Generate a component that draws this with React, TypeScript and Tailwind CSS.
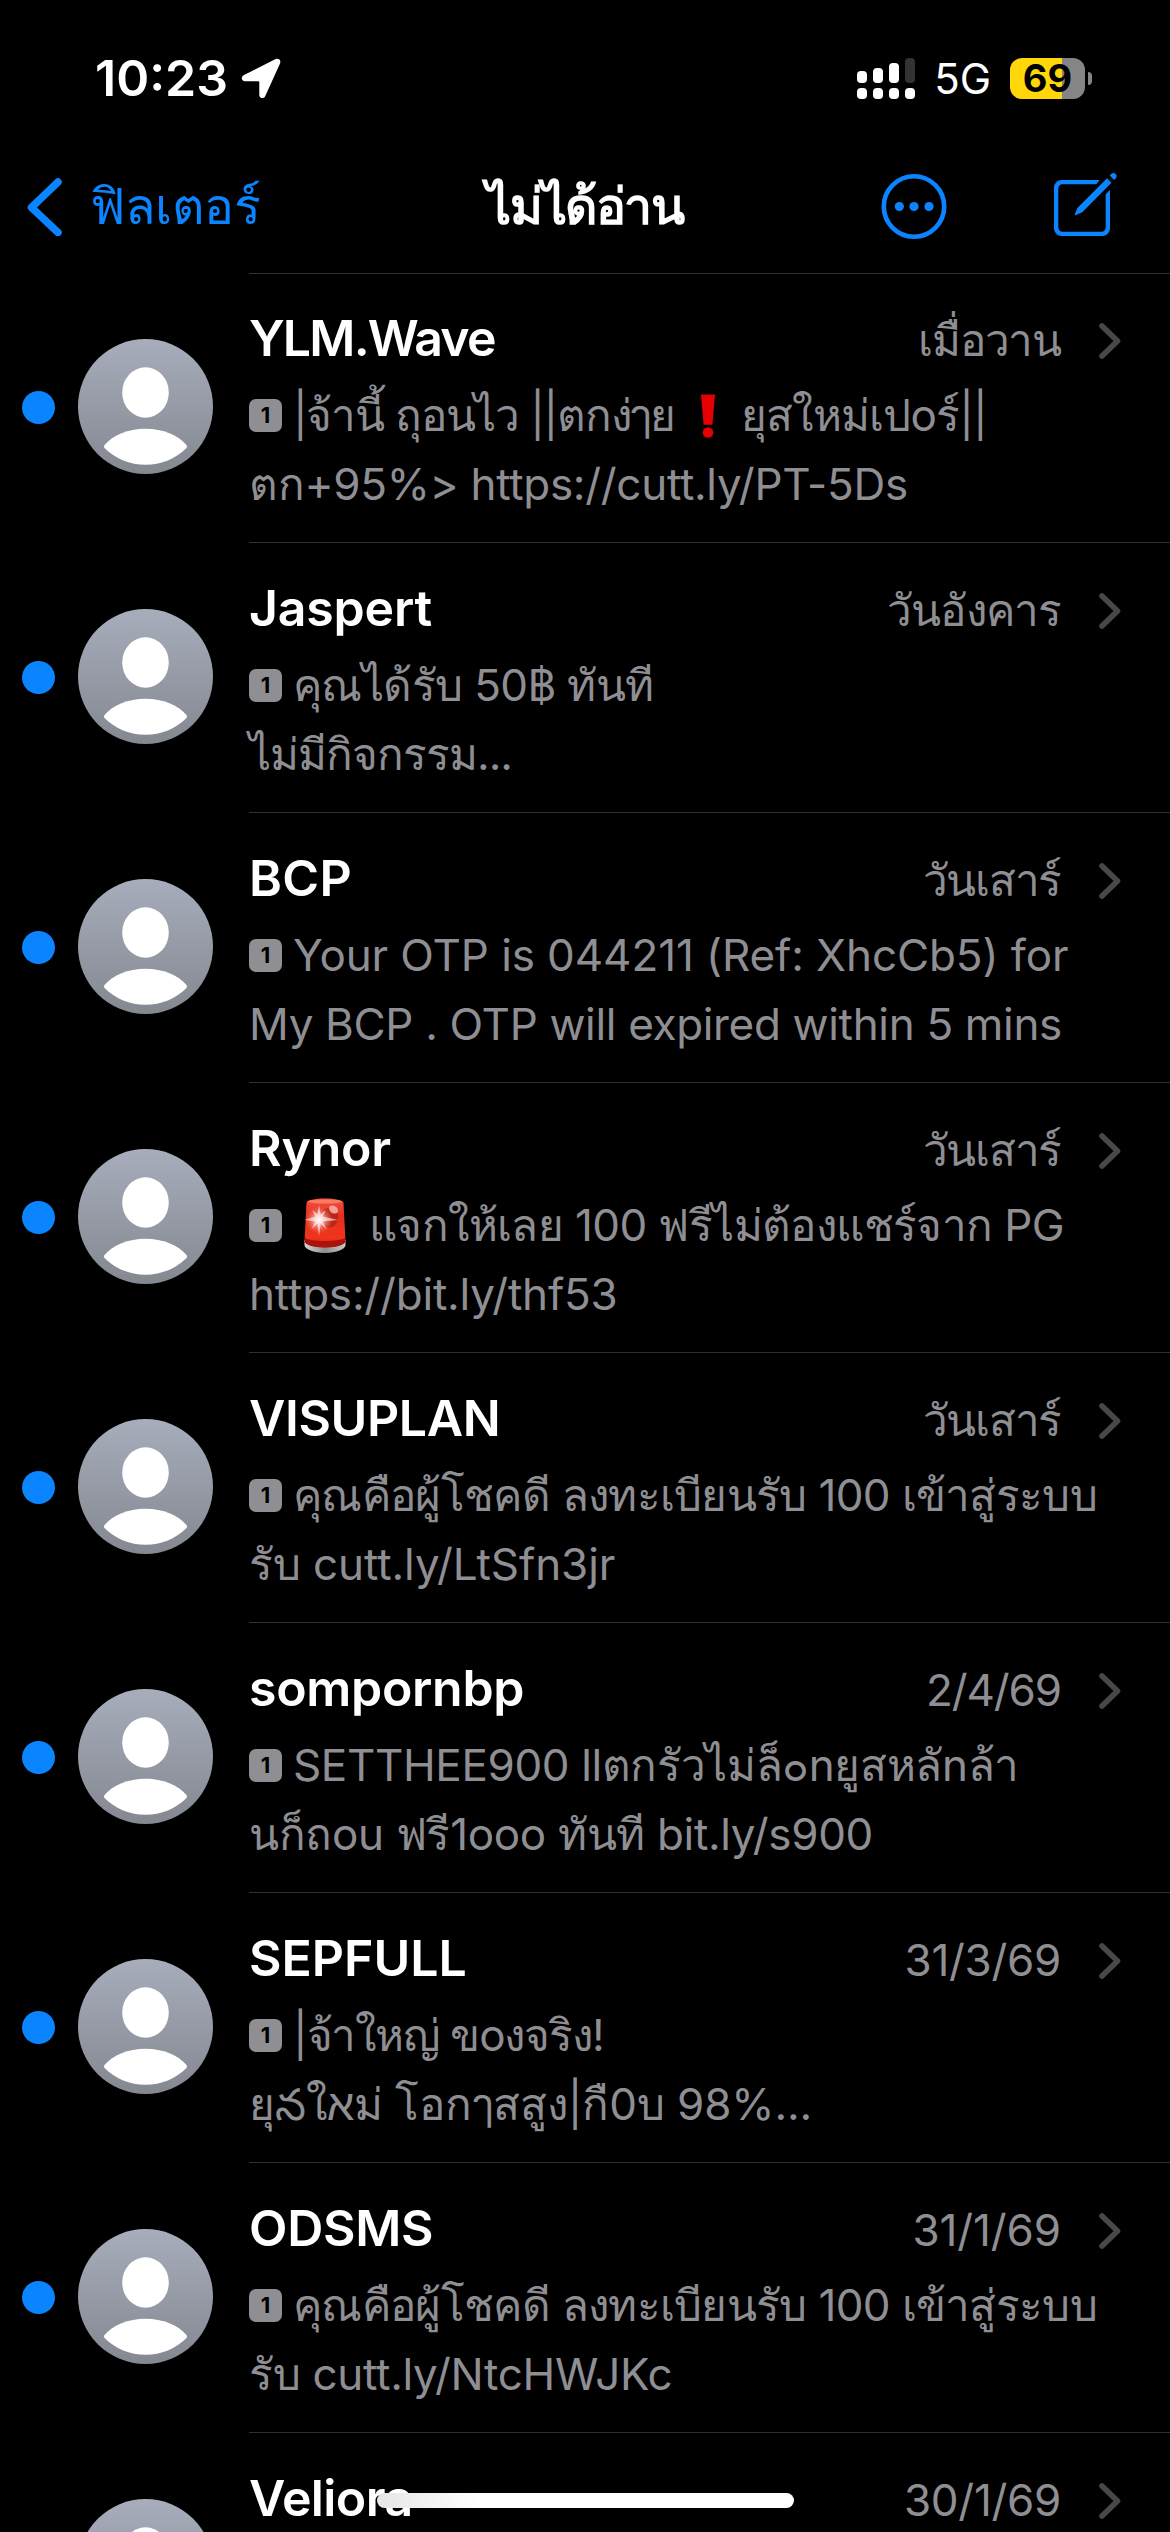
import type { ReactNode } from "react";

type Message = {
  name: string;
  nameClass?: string;
  date: string;
  dateClass?: string;
  first: ReactNode;
  second: string;
  firstClass?: string;
  secondClass?: string;
};

function Exclamation() {
  return (
    <svg viewBox="0 0 14 44" className="mx-[26px] h-[44px] w-[14px] shrink-0">
      <path d="M0 0.5h14l-2.6 30.3h-8.8z" fill="#e60000" />
      <circle cx="7" cy="38.5" r="5.3" fill="#e60000" />
    </svg>
  );
}

function Siren() {
  return (
    <svg viewBox="0 0 42 56" className="mr-[23px] ml-[11px] h-[56px] w-[42px] shrink-0">
      <defs>
        <linearGradient id="dome" x1="0" y1="0" x2="0" y2="1">
          <stop offset="0" stopColor="#f2543f" />
          <stop offset="0.35" stopColor="#e3301f" />
          <stop offset="0.8" stopColor="#f0341d" />
          <stop offset="1" stopColor="#d6200f" />
        </linearGradient>
        <linearGradient id="base" x1="0" y1="0" x2="1" y2="0">
          <stop offset="0" stopColor="#d5d5d2" />
          <stop offset="0.5" stopColor="#8f908d" />
          <stop offset="1" stopColor="#c9c9c6" />
        </linearGradient>
        <radialGradient id="glow">
          <stop offset="0" stopColor="#fff" />
          <stop offset="0.3" stopColor="#ffc4c0" stopOpacity="0.85" />
          <stop offset="1" stopColor="#ff6a5c" stopOpacity="0" />
        </radialGradient>
      </defs>
      <path d="M0.5 42v5c0 4 9 8 20.5 8s20.5-4 20.5-8v-5z" fill="url(#base)" />
      <path d="M2.5 5C2.5 2 11 0.500 21 0.500S39 2 39.5 5l2 38c0 3-9 6.500-20.5 6.500S0.500 46 0.500 43z" fill="url(#dome)" />
      <path d="M1 40c5 4 34 4 40 0l0.300 3.500c0 3-9 6-20.300 6S0.700 46.500 0.700 43.500z" fill="#a8140c" />
      <ellipse cx="21" cy="3.5" rx="17" ry="2" fill="#ff8d76" opacity="0.7" />
      <path d="M19 12c8-5 17 0 15 9s-10 10-17 8z" fill="#8f170d" opacity="0.5" />
      <ellipse cx="29.5" cy="11.5" rx="5" ry="3.6" transform="rotate(35 29.5 11.5)" fill="#ffb3ab" opacity="0.85" />
      <circle cx="15" cy="22" r="14" fill="url(#glow)" />
      <path
        d="M15 7l1.700 9.500 5-4.500-3 6.600L34 22l-15.300 1.400 4 8-6-5.800L15 38l-1.700-12.400-6 5.800 4-8L0.500 22l10.800-3.400-3-6.600 5 4.500z"
        fill="#fff"
        opacity="0.6"
      />
    </svg>
  );
}

const messages: Message[] = [
  {
    name: "YLM.Wave",
    nameClass: "tracking-[-1.8px]",
    date: "เมื่อวาน",
    dateClass: "tracking-[-1.2px]",
    first: (
      <>
        <span className="tracking-[-1.2px]">|จ้านี้ ถุอนไว ||ตกง่ๅย</span>
        <Exclamation />
        <span className="tracking-[-0.8px]">ยุสใหม่เปoร์||</span>
      </>
    ),
    second: "ตก+95%> https://cutt.ly/PT-5Ds",
    secondClass: "tracking-[-0.3px]",
  },
  {
    name: "Jaspert",
    nameClass: "tracking-[-0.2px]",
    date: "วันอังคาร",
    dateClass: "tracking-[-0.9px]",
    first: "คุณได้รับ 50฿ ทันที",
    firstClass: "tracking-[-0.6px]",
    second: "ไม่มีกิจกรรม...",
    secondClass: "tracking-[-1px]",
  },
  {
    name: "BCP",
    nameClass: "tracking-[0.3px]",
    date: "วันเสาร์",
    dateClass: "tracking-[-1.3px]",
    first: "Your OTP is 044211 (Ref: XhcCb5) for",
    firstClass: "tracking-[-0.1px]",
    second: "My BCP . OTP will expired within 5 mins",
    secondClass: "tracking-[-0.33px]",
  },
  {
    name: "Rynor",
    nameClass: "tracking-[-0.2px]",
    date: "วันเสาร์",
    dateClass: "tracking-[-1.3px]",
    first: (
      <>
        <Siren />
        <span className="tracking-[-0.6px]">แจกให้เลย 100 ฟรีไม่ต้องแชร์จาก PG</span>
      </>
    ),
    second: "https://bit.ly/thf53",
    secondClass: "tracking-[-0.2px]",
  },
  {
    name: "VISUPLAN",
    nameClass: "tracking-[-0.4px]",
    date: "วันเสาร์",
    dateClass: "tracking-[-1.3px]",
    first: "คุณคือผู้โชคดี ลงทะเบียนรับ 100 เข้าสู่ระบบ",
    firstClass: "tracking-[-0.68px]",
    second: "รับ cutt.ly/LtSfn3jr",
    secondClass: "tracking-[-0.1px]",
  },
  {
    name: "sompornbp",
    nameClass: "tracking-[-0.3px]",
    date: "2/4/69",
    dateClass: "tracking-[-1.1px]",
    first: "SETTHEE900 llตกรัวไม่ล็๐nยูสหลัnล้า",
    firstClass: "tracking-[-0.37px]",
    second: "นก็ถou ฟรี1ooo ทันที bit.ly/s900",
    secondClass: "tracking-[-0.33px]",
  },
  {
    name: "SEPFULL",
    date: "31/3/69",
    dateClass: "tracking-[-0.3px]",
    first: "|จ้าใหญ่ ขoงจริง!",
    firstClass: "tracking-[-1.1px]",
    second: "ยุనใאม่ โอกๅสสูง|กื0บ 98%...",
    secondClass: "tracking-[-0.1px]",
  },
  {
    name: "ODSMS",
    nameClass: "tracking-[-0.3px]",
    date: "31/1/69",
    dateClass: "tracking-[-0.1px]",
    first: "คุณคือผู้โชคดี ลงทะเบียนรับ 100 เข้าสู่ระบบ",
    firstClass: "tracking-[-0.68px]",
    second: "รับ cutt.ly/NtcHWJKc",
    secondClass: "tracking-[-0.3px]",
  },
  {
    name: "Veliora",
    nameClass: "tracking-[-0.6px]",
    date: "30/1/69",
    dateClass: "tracking-[-0.3px]",
    first: "",
    second: "",
  },
];

const signalBars = [
  { id: 1, className: "h-[12px] bg-white" },
  { id: 2, className: "h-[15px] bg-white" },
  { id: 3, className: "h-[20px] bg-white" },
  { id: 4, className: "h-[25px] bg-[#333333]" },
];

function StatusBar() {
  return (
    <div className="flex h-[156px] items-center justify-between pr-[78px] pl-[95px] text-white">
      <div className="flex items-center gap-[13px]">
        <span className="text-[50px] leading-[60px] font-semibold">10:23</span>
        <svg viewBox="0 0 40 40" className="h-[40px] w-[40px]">
          <path
            d="M34.2 1.3 3 17c-3.6 2-2.6 6.3 1 6.3h13.4c.6 0 .9.3.9.9v12.6c0 4 4.6 4.4 6 1.1L39 5.6c1.4-3.4-1.500-5.900-4.800-4.300z"
            fill="white"
          />
        </svg>
      </div>
      <div className="flex items-center">
        <div className="flex gap-[6px]">
          {signalBars.map((bar) => (
            <div key={bar.id} className="flex h-[41px] w-[10px] flex-col justify-end gap-[5px]">
              <div className={`w-full rounded-[4px] ${bar.className}`} />
              <div className="h-[11px] w-full rounded-[4px] bg-white" />
            </div>
          ))}
        </div>
        <span className="mt-[2px] ml-[19px] text-[42px] leading-[50px]">5G</span>
        <div className="ml-[19px] flex items-center gap-[3px]">
          <div className="flex h-[41px] w-[75px] items-center justify-center rounded-[12px] bg-linear-to-r from-[#ffd60a] from-70% to-[#858585] to-70% text-[38px] leading-[41px] font-bold text-black">
            69
          </div>
          <div className="h-[13px] w-[4px] rounded-r-full bg-[#858585]" />
        </div>
      </div>
    </div>
  );
}

function NavBar() {
  return (
    <div className="grid h-[116px] grid-cols-[1fr_auto_1fr]">
      <div className="flex items-start pl-[27px] text-[#0a84ff]">
        <svg viewBox="0 0 36 58" className="mt-[22px] h-[58px] w-[36px]">
          <path d="M31 4 4.5 29.5 31 54.5" fill="none" stroke="currentColor" strokeWidth="7.5" strokeLinecap="round" strokeLinejoin="round" />
        </svg>
        <span className="mt-[20px] ml-[27px] text-[50px] leading-[60px] tracking-[-0.3px]">ฟิลเตอร์</span>
      </div>
      <h1 className="mt-[20px] text-[50px] leading-[60px] font-semibold tracking-[-1.4px] text-white">ไม่ได้อ่าน</h1>
      <div className="flex items-start justify-end pr-[52px] text-[#0a84ff]">
        <svg viewBox="0 0 66 66" className="mt-[18px] mr-[105px] h-[66px] w-[66px]" fill="currentColor">
          <circle cx="33" cy="32.5" r="30.2" fill="none" stroke="currentColor" strokeWidth="4.6" />
          <circle cx="18.3" cy="32.5" r="4.6" />
          <circle cx="33" cy="32.5" r="4.6" />
          <circle cx="48" cy="32.5" r="4.6" />
        </svg>
        <svg viewBox="0 0 66 66" className="mt-[16px] h-[66px] w-[66px]" fill="currentColor">
          <path d="M47.700 8H9.500a7.500 7.500 0 0 0-7.500 7.500v41a7.500 7.500 0 0 0 7.500 7.500h41a7.500 7.500 0 0 0 7.500-7.500V18l-4.300 4.300v33.200a4.200 4.200 0 0 1-4.200 4.200h-39a4.200 4.200 0 0 1-4.200-4.200v-39a4.200 4.200 0 0 1 4.200-4.200h33.900z" />
          <path d="M55 6.2 59.500 10.700 30.300 40.300l-6.300 2.800c-.8.300-1.500-.4-1.200-1.200l2.800-6.200z" />
          <path d="M57.7 3.5l2-1.900c2.700-2 6.300 1.700 4.300 4.400l-1.900 2z" />
        </svg>
      </div>
    </div>
  );
}

function Avatar() {
  return (
    <div className="mt-[66px] ml-[23px] h-[135px] w-[135px] shrink-0 rounded-full bg-linear-to-b from-[#a7adbb] to-[#848891]">
      <svg viewBox="0 0 135 135" className="h-full w-full" fill="white">
        <ellipse cx="67.5" cy="53.5" rx="23.3" ry="25.2" />
        <path d="M26.5 106C35 96 50 89.7 67.5 89.7S100 96 108.5 106q1.100 1.500 0 2.900C98 119.500 83 125.700 67.5 125.700S37 119.500 26.500 108.900q-1.100-1.400 0-2.900z" />
      </svg>
    </div>
  );
}

function MessageRow({ message }: { message: Message }) {
  return (
    <li className="flex h-[270px] shrink-0 pl-[22px]">
      <div className="mt-[118px] h-[33px] w-[33px] shrink-0 rounded-full bg-[#0a84ff]" />
      <Avatar />
      <div className="ml-[36px] flex-1 border-b border-[#303032]">
        <div className="mt-[35px] flex h-[60px] items-start pr-[49px]">
          <span className={`text-[50px] leading-[60px] font-semibold text-white ${message.nameClass ?? ""}`}>
            {message.name}
          </span>
          <span className={`mt-[2px] ml-auto text-[44px] leading-[60px] text-[#8e8e93] ${message.dateClass ?? ""}`}>
            {message.date}
          </span>
          <svg viewBox="0 0 22 36" className="mt-[15px] ml-[38px] h-[36px] w-[22px]">
            <path d="M3 3 18.5 18 3 33" fill="none" stroke="#48484a" strokeWidth="5.6" strokeLinecap="round" strokeLinejoin="round" />
          </svg>
        </div>
        {message.second && (
          <div className="mt-[13px] text-[44px] leading-[69px] whitespace-nowrap text-[#8e8e93]">
            <div className="flex h-[69px] items-center">
              <span className="mr-[11px] flex h-[33px] w-[33px] shrink-0 items-center justify-center rounded-[7px] bg-[#8e8e93] text-[22px] leading-[33px] font-bold text-black">
                1
              </span>
              <div className={`flex items-center ${message.firstClass ?? ""}`}>{message.first}</div>
            </div>
            <p className={message.secondClass}>{message.second}</p>
          </div>
        )}
      </div>
    </li>
  );
}

export default function App() {
  return (
    <div className="relative h-[2532px] w-[1170px] overflow-hidden bg-black font-['Inter','Noto_Sans',sans-serif]">
      <StatusBar />
      <NavBar />
      <div className="ml-[249px] h-[2px] border-b border-[#303032]" />
      <ul className="-mt-px flex flex-col">
        {messages.map((message) => (
          <MessageRow key={message.name} message={message} />
        ))}
      </ul>
      <div className="absolute bottom-[24px] left-[377px] h-[15px] w-[417px] rounded-full bg-linear-to-r from-[#e6e6e6] to-white to-25%" />
    </div>
  );
}
